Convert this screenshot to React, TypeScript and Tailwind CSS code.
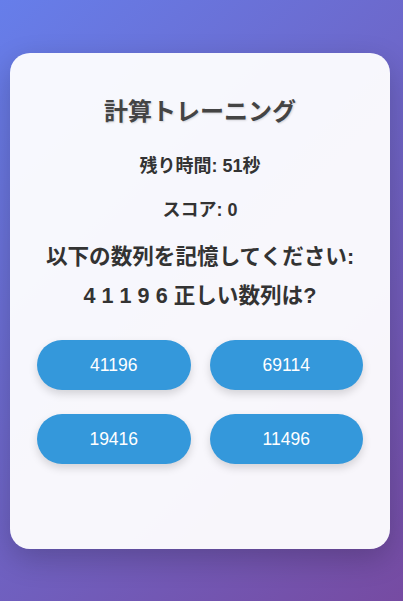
const options = ["41196", "69114", "19416", "11496"];

export default function App() {
  return (
    <div
      className="min-h-screen w-full bg-[linear-gradient(135deg,#667eea_0%,#764ba2_100%)] px-[10px] pt-[53px] pb-[52px]"
      style={{ fontFamily: '"Liberation Sans", "Noto Sans CJK JP", sans-serif' }}
    >
      <div className="w-[380px] rounded-[20px] bg-white/95 px-[27px] pt-[43px] pb-[85px] text-center shadow-[0_10px_30px_rgba(0,0,0,0.2)]">
        <h1 className="text-[24px] leading-[32px] font-bold text-[#444] [text-shadow:1px_1px_2px_rgba(0,0,0,0.15)]">
          計算トレーニング
        </h1>
        <div className="mt-[25px] text-[18px] leading-[27px] font-bold text-[#333]">
          残り時間: 51秒
        </div>
        <div className="mt-[17px] text-[18px] leading-[27px] font-bold text-[#333]">
          スコア: 0
        </div>
        <div className="mt-[13px] text-[21.6px] leading-[39px] font-bold text-[#333] whitespace-nowrap">
          以下の数列を記憶してください:
          <br />4 1 1 9 6 正しい数列は?
        </div>
        <div className="mt-[25px] grid grid-cols-2 gap-x-[19px] gap-y-[24px]">
          {options.map((opt) => (
            <button
              key={opt}
              className="h-[50px] rounded-full bg-[#3498db] text-[17.5px] text-white shadow-[0_4px_8px_rgba(0,0,0,0.15)]"
            >
              {opt}
            </button>
          ))}
        </div>
      </div>
    </div>
  );
}
